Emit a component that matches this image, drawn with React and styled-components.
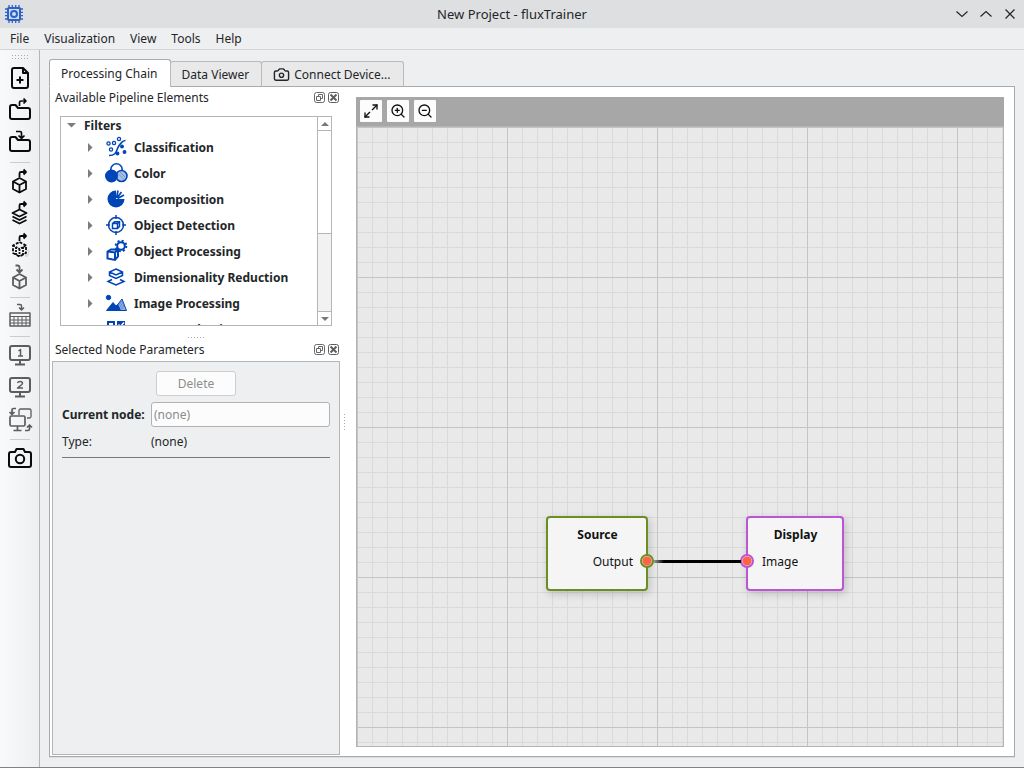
import React, { useState } from "react";
import styled, { createGlobalStyle } from "styled-components";
import { Camera, Maximize2, ZoomIn, ZoomOut } from "lucide-react";

const GlobalStyle = createGlobalStyle`
  * {
    box-sizing: border-box;
  }
  body {
    margin: 0;
    font-family: "Noto Sans", sans-serif;
    font-size: 12px;
    line-height: 19px;
    color: #232629;
    background: #eeeff1;
  }
  button,
  input {
    font: inherit;
    color: inherit;
    margin: 0;
    padding: 0;
  }
`;

const Window = styled.div`
  height: 100vh;
  display: flex;
  flex-direction: column;
  border-bottom: 1px solid #808284;
`;

const TitleBar = styled.header`
  height: 28px;
  flex-shrink: 0;
  display: grid;
  grid-template-columns: 1fr auto 1fr;
  align-items: center;
  padding: 0 4px;
  background: #dedfe1;
`;

const WindowTitle = styled.h1`
  margin: 0;
  font-size: 13px;
  line-height: 18px;
  font-weight: 400;
`;

const WindowButtons = styled.div`
  display: flex;
  justify-content: flex-end;
  gap: 12px;
  padding-right: 4px;
`;

const PlainButton = styled.button`
  display: flex;
  border: 0;
  background: none;
`;

const MenuBar = styled.nav`
  height: 22px;
  flex-shrink: 0;
  display: flex;
  align-items: center;
  gap: 15px;
  padding: 0 10px 1px;
  border-bottom: 1px solid #d3d4d6;
`;

const MenuItem = styled.button`
  border: 0;
  background: none;
`;

const Body = styled.div`
  flex: 1;
  min-height: 0;
  display: flex;
`;

const ToolBar = styled.aside`
  width: 40px;
  flex-shrink: 0;
  display: flex;
  flex-direction: column;
  border-right: 1px solid #b4b5b7;
  background: linear-gradient(to right, #f9fafc, #eeeff1);
`;

const Grip = styled.span`
  flex-shrink: 0;
  align-self: center;
  width: ${({ $vertical }) => ($vertical ? "1px" : "16px")};
  height: ${({ $vertical }) => ($vertical ? "16px" : "1px")};
  background-image: linear-gradient(to right, #a9aaac 1px, transparent 1px);
  background-size: 3px 3px;
  mask-image: linear-gradient(#000 1px, transparent 1px);
  mask-size: 3px 3px;
`;

const ToolGrip = styled(Grip)`
  height: 5px;
  margin: 5px 0 2px;
`;

const ToolButton = styled.button`
  height: 32px;
  flex-shrink: 0;
  padding-left: 4px;
  border: 0;
  background: none;
  color: ${({ disabled }) => (disabled ? "#5c5d5e" : "#0b0b0b")};
  svg {
    display: block;
  }
`;

const ToolSeparator = styled.hr`
  width: 20px;
  height: 1px;
  flex-shrink: 0;
  margin: 4px 0 2px 10px;
  border: 0;
  background: #cbccce;
`;

const Main = styled.main`
  flex: 1;
  min-width: 0;
  display: flex;
  flex-direction: column;
  padding: 9px 9px 10px;
`;

const Tabs = styled.div`
  display: flex;
  align-items: flex-end;
  height: 28px;
  margin-bottom: -1px;
  z-index: 1;
`;

const Tab = styled.button`
  height: ${({ $active }) => ($active ? "28px" : "26px")};
  display: flex;
  align-items: center;
  gap: 4px;
  padding: 0 12px 0 11px;
  margin-right: -1px;
  border: 1px solid ${({ $active }) => ($active ? "#a9aaac" : "#b9babb")};
  border-bottom-color: ${({ $active }) => ($active ? "#fff" : "#a9aaab")};
  border-radius: 3px 3px 0 0;
  background: ${({ $active }) => ($active ? "#fff" : "#e9e9ea")};
`;

const Panel = styled.section`
  flex: 1;
  min-height: 0;
  display: flex;
  border: 1px solid #a9aaab;
  background: #fff;
  box-shadow: 0 1px 0 #dcddde;
`;

const Docks = styled.div`
  width: 290px;
  flex-shrink: 0;
  display: flex;
  flex-direction: column;
  padding: 0 0 1px 2px;
`;

const DockTitle = styled.div`
  height: 22px;
  flex-shrink: 0;
  display: flex;
  align-items: center;
  gap: 3px;
  padding: 0 1px 1px 3px;
`;

const DockName = styled.h2`
  flex: 1;
  margin: 0;
  font-size: 12px;
  font-weight: 400;
`;

const TreeFrame = styled.div`
  height: 210px;
  flex-shrink: 0;
  display: flex;
  margin: 7px 8px 11px;
  border: 1px solid #b4b5b6;
`;

const Tree = styled.ul`
  flex: 1;
  margin: 0;
  padding: 0;
  overflow: hidden;
  list-style: none;
  font-weight: 700;
`;

const TreeRoot = styled.li`
  height: 17px;
  display: flex;
  align-items: center;
  gap: 8px;
  padding-left: 6px;
  line-height: 16px;
`;

const TreeItem = styled.li`
  height: 26px;
  display: flex;
  align-items: center;
  padding-left: 27px;
  white-space: nowrap;
`;

const TreeIcon = styled.svg`
  width: 24px;
  height: 24px;
  flex-shrink: 0;
  margin: 0 6px 0 11px;
  fill: none;
  stroke: #0045b8;
  stroke-width: 2;
`;

const ScrollBar = styled.div`
  width: 14px;
  display: flex;
  flex-direction: column;
  border-left: 1px solid #b4b5b6;
  background: #f2f2f2;
`;

const ScrollButton = styled.button`
  height: 14px;
  display: grid;
  place-items: center;
  border: 0;
  border-bottom: ${({ $up }) => ($up ? "1px solid #b4b5b6" : "0")};
  border-top: ${({ $up }) => ($up ? "0" : "1px solid #b4b5b6")};
  background: #fff;
`;

const ScrollThumb = styled.div`
  height: 103px;
  margin-bottom: auto;
  border-bottom: 1px solid #b4b5b6;
  background: #fff;
`;

const DockSplitter = styled.div`
  height: 2px;
  flex-shrink: 0;
  display: flex;
  justify-content: center;
  align-items: flex-start;
  ${Grip} {
    align-self: flex-start;
  }
`;

const Parameters = styled.form`
  flex: 1;
  display: flex;
  flex-direction: column;
  padding: 9px;
  border: 1px solid #b4b5b6;
  background: #eeeff1;
`;

const DeleteButton = styled.button`
  width: 80px;
  height: 25px;
  align-self: center;
  border: 1px solid #cdcecf;
  border-radius: 3px;
  background: #fcfcfc;
  color: #8b8c8d;
`;

const Fields = styled.div`
  display: grid;
  grid-template-columns: 84px 1fr;
  align-items: center;
  gap: 5px;
  padding: 6px 0;
  border-bottom: 1px solid #77797b;
`;

const FieldLabel = styled.label`
  font-weight: ${({ $bold }) => ($bold ? 700 : 400)};
  white-space: nowrap;
`;

const NodeInput = styled.input`
  width: 100%;
  height: 25px;
  padding: 0 2px;
  border: 1px solid #b1b2b3;
  border-radius: 3px;
  background: #fcfcfc;
  color: #8b8c8d;
`;

const FieldValue = styled.output`
  white-space: nowrap;
`;

const Splitter = styled.div`
  width: 16px;
  flex-shrink: 0;
  display: flex;
  padding-left: 4px;
`;

const Workspace = styled.div`
  flex: 1;
  min-width: 0;
  display: flex;
  flex-direction: column;
  margin: 10px 10px 9px 0;
`;

const CanvasBar = styled.div`
  height: 29px;
  flex-shrink: 0;
  display: flex;
  align-items: center;
  gap: 5px;
  padding: 0 0 1px 4px;
  background: #a7a7a7;
`;

const CanvasButton = styled.button`
  width: 22px;
  height: 22px;
  display: grid;
  place-items: center;
  border: 0;
  border-radius: 1px;
  background: #fcfcfc;
  color: #111;
`;

const Canvas = styled.div`
  flex: 1;
  position: relative;
  overflow: hidden;
  border: 1px solid #b4b5b6;
  background-color: #e9e9e9;
  background-image: linear-gradient(to right, #c4c4c4 1px, transparent 1px),
    linear-gradient(#c4c4c4 1px, transparent 1px),
    linear-gradient(to right, #dadada 1px, transparent 1px),
    linear-gradient(#dadada 1px, transparent 1px);
  background-size: 150px 150px, 150px 150px, 15px 15px, 15px 15px;
`;

const Node = styled.div`
  position: absolute;
  left: ${({ $x }) => $x}px;
  top: 389px;
  width: ${({ $w }) => $w}px;
  height: 75px;
  padding: 7px 13px 7px 14px;
  border: 2px solid ${({ $color }) => $color};
  border-radius: 4px;
  background: #f5f5f5;
  box-shadow: 2px 3px 8px rgba(0, 0, 0, 0.18);
  color: #111;
  text-align: ${({ $side }) => $side};
`;

const NodeTitle = styled.h3`
  margin: 0 0 8px;
  font-size: 12px;
  text-align: center;
`;

const Port = styled.span`
  position: absolute;
  top: 36px;
  ${({ $side }) => $side}: -8px;
  width: 14px;
  height: 14px;
  border: 2px solid ${({ $color }) => $color};
  border-radius: 50%;
  background: radial-gradient(circle, #ff6347 4px, #f3d9d0 5px);
`;

const Wire = styled.span`
  position: absolute;
  left: 297px;
  top: 433px;
  width: 87px;
  height: 3px;
  background: linear-gradient(to right, #999, #000 10px);
`;

const arrowOut = <path d="M15.500 12V8.500a1.500 1.500 0 0 1 1.500-1.500h5M19.500 4.500 22 7l-2.500 2.500" />;
const arrowIn = <path d="M12 5.500h4a1.500 1.500 0 0 1 1.500 1.500v5M14.500 9.500l3 3 3-3" />;
const folder = (
  <path d="M6 13a2 2 0 0 1 2-2h3.500l2.500 3H24a2 2 0 0 1 2 2v7a2 2 0 0 1-2 2H8a2 2 0 0 1-2-2z" />
);
const cube = <path d="m15.500 13 6.500 3.500v7.500L15.500 27.500 9 24v-7.500zM9 16.500l6.500 3.500 6.500-3.500M15.500 20v7.500" />;
const screen = (
  <>
    <rect x="6" y="7" width="20" height="14" rx="2" />
    <path d="M16 21v4M11 25.500h10" />
  </>
);

const toolIcons = {
  newFile: (
    <>
      <path d="M10 6h9l5 5v13a2 2 0 0 1-2 2H10a2 2 0 0 1-2-2V8a2 2 0 0 1 2-2zM19 6v5h5" />
      <path d="M16 14.500v7M12.500 18h7" />
    </>
  ),
  open: <>{folder}<g strokeWidth="1.700">{arrowOut}</g></>,
  save: <>{folder}<g strokeWidth="1.700">{arrowIn}</g></>,
  cubeOut: <g strokeWidth="1.800">{arrowOut}{cube}</g>,
  layersOut: (
    <g strokeWidth="1.800">
      {arrowOut}
      <path d="m15.500 12.500 7 3.500-7 3.500-7-3.500zM8.500 19.500l7 3.500 7-3.500M8.500 23l7 3.500 7-3.500" />
    </g>
  ),
  cubeDashed: (
    <g strokeWidth="1.800">
      {arrowOut}
      <path d="m15.500 13 6.500 3.500v7.500L15.500 27.500 9 24v-7.500z" strokeDasharray="3 1.500" />
      <path d="m9 16.500 6.500 3.500 6.500-3.500M15.500 20v7.500M12 18v8M19 18v8" strokeDasharray="2 1" />
      <path d="M22 22q4-2 3 1t-4 4q4 1 3-2" stroke="#d0d1d2" strokeWidth="1" />
    </g>
  ),
  cubeIn: (
    <g strokeWidth="1.800">
      <path d="M11.500 4.500h2a2 2 0 0 1 2 2v4M12.500 8.500l3 3 3-3" />
      {cube}
    </g>
  ),
  table: (
    <g strokeWidth="1.500">
      <path d="M13 4.500h3a1.500 1.500 0 0 1 1.500 1.500v4M15 7.500l2.500 2.500 2.500-2.500" />
      <path d="M6 13h20v13H6z" />
      <path d="M6 16.500h20M6 20h20M6 23h20M10 16.500V26M14 16.500V26M18 16.500V26M22 16.500V26" strokeWidth="1" />
    </g>
  ),
  screen1: <>{screen}<path d="m14.500 12 2-1.500v7M14 17h5" strokeWidth="1.500" /></>,
  screen2: <>{screen}<path d="M13.500 12q.5-1.500 2.500-1.500 2.500 0 2.500 1.800 0 1.200-5 4.700h5.500" strokeWidth="1.500" /></>,
  swap: (
    <g strokeWidth="1.700">
      <path d="M15 12V7.500A1.500 1.500 0 0 1 16.500 6h9A1.500 1.500 0 0 1 27 7.500v6a1.500 1.500 0 0 1-1.500 1.500H23" strokeWidth="1.300" />
      <rect x="6" y="13" width="15" height="10" rx="1.500" />
      <path d="M13.500 23v4M9.500 27.500h8M12 5.500H9.500A1.500 1.500 0 0 0 8 7v4M5.500 9 8 11.500l2.500-2.500M21 27.500h3a1.500 1.500 0 0 0 1.500-1.500v-4M23 24.500l2.500-2.500 2.500 2.500" />
    </g>
  ),
  camera: (
    <>
      <path d="M5 12a2 2 0 0 1 2-2h4l1.500-3h7l1.500 3h4a2 2 0 0 1 2 2v11a2 2 0 0 1-2 2H7a2 2 0 0 1-2-2z" />
      <circle cx="16" cy="17" r="4.200" />
    </>
  ),
};

const tools = [
  { icon: "newFile", label: "New project" },
  { icon: "open", label: "Open project" },
  { icon: "save", label: "Save project" },
  null,
  { icon: "cubeOut", label: "Open cube" },
  { icon: "layersOut", label: "Open layers" },
  { icon: "cubeDashed", label: "Open partial cube" },
  { icon: "cubeIn", label: "Save cube", disabled: true },
  null,
  { icon: "table", label: "Export table", disabled: true },
  null,
  { icon: "screen1", label: "Display 1", disabled: true },
  { icon: "screen2", label: "Display 2", disabled: true },
  { icon: "swap", label: "Swap displays", disabled: true },
  null,
  { icon: "camera", label: "Camera" },
];

const filters = [
  {
    name: "Classification",
    icon: (
      <g strokeWidth="1.300">
        <path d="M5 20.500c8 0 7-5 9.500-9S19 5.500 21.500 5.500" strokeWidth="1.600" />
        <circle cx="4.500" cy="8.500" r="1.600" />
        <circle cx="10" cy="8" r="1.600" />
        <circle cx="15" cy="4" r="1.600" />
        <circle cx="7" cy="14.500" r="1.600" />
        <g fill="#0045b8">
          <circle cx="18" cy="11.500" r="1.300" />
          <circle cx="20.500" cy="17" r="1.300" />
          <circle cx="13.500" cy="18.500" r="1.300" />
        </g>
      </g>
    ),
  },
  {
    name: "Color",
    icon: (
      <g strokeWidth="1.600">
        <circle cx="12.500" cy="8.500" r="5.700" />
        <circle cx="17.500" cy="15" r="5.500" fill="#a9c0e6" />
        <circle cx="7.500" cy="15" r="5.700" fill="#0045b8" />
        <path d="m14.500 13 5.500 5.500M16 11l5 5" stroke="#6f95d6" strokeWidth="1" />
      </g>
    ),
  },
  {
    name: "Decomposition",
    icon: (
      <>
        <path d="M12 3.500a8.500 8.500 0 1 0 8.500 8.500H12z" fill="#0045b8" stroke="none" />
        <path d="m12.500 11 1.500-7.500M13 11l4.500-6M13.500 11.500 20 8" strokeWidth="1.700" />
      </>
    ),
  },
  {
    name: "Object Detection",
    icon: (
      <g strokeWidth="1.500">
        <circle cx="12" cy="12" r="7.500" />
        <path d="M12 2v4M12 18v4M2 12h4M18 12h4" />
        <path d="m8.500 10.500 2-1.800h5v4.800l-2 2h-5zM8.500 10.500h5v5M13.500 10.500l2-1.800" />
      </g>
    ),
  },
  {
    name: "Object Processing",
    icon: (
      <>
        <path d="m3.500 12.500 3.500-2h7v7l-3 3.500-7.500-1.500zM3.500 12.500l7.500 1 3-3M11 13.500V21" />
        <circle cx="17" cy="7" r="3.800" />
        <circle cx="17" cy="7" r="5.300" strokeDasharray="2 2.160" />
      </>
    ),
  },
  {
    name: "Dimensionality Reduction",
    icon: (
      <g strokeWidth="1.500">
        <path d="m12 4 6.500 3v3.500L12 13.500l-6.500-3V7zM5.500 7l6.500 3 6.500-3" />
        <path d="M8 14.500 4 16.500l8 3.500 8-3.500-4-2" />
      </g>
    ),
  },
  {
    name: "Image Processing",
    icon: (
      <g strokeWidth="1">
        <path d="M13 14.500 18 8l4.500 11.500H15z" fill="#8facdf" />
        <path d="m14 15 4-5M15 17l4-5M17 18l3-4" stroke="#5c85cf" />
        <path d="m2.500 19.500 6.500-8 3 3.500 1.500-1.500 3 6z" fill="#0045b8" />
        <circle cx="4.500" cy="6.500" r="2.200" fill="#0045b8" />
      </g>
    ),
  },
  {
    name: "Feature Selection",
    icon: (
      <>
        <path d="M4 5h6v6H4zM4 15h6v6H4z" />
        <path d="M13 4h8v8h-8z" fill="#0045b8" stroke="none" />
        <path d="m14.500 7.500 2 2L20 5.500" stroke="#fff" strokeWidth="1.500" />
      </>
    ),
  },
];

const DockHeader = ({ name }) => (
  <DockTitle>
    <DockName>{name}</DockName>
    <PlainButton aria-label="Float panel">
      <svg width="11" height="11" fill="none" stroke="#66686a">
        <rect x=".5" y=".5" width="10" height="10" rx="2" />
        <path d="M4.500 4.500v-2h4v4h-2M2.500 4.500h4v4h-4z" />
      </svg>
    </PlainButton>
    <PlainButton aria-label="Close panel">
      <svg width="11" height="11" fill="none" stroke="#5c5e60">
        <rect x=".5" y=".5" width="10" height="10" rx="2" />
        <path d="m2.500 2.500 6 6M8.500 2.500l-6 6" strokeWidth="2" />
      </svg>
    </PlainButton>
  </DockTitle>
);

const App = () => {
  const [tab, setTab] = useState("Processing Chain");

  return (
    <>
      <GlobalStyle />
      <Window>
        <TitleBar>
          <svg width="20" height="20" fill="none" stroke="#2a62c8" strokeWidth="2">
            <path d="M5 1v18M8.300 1v18M11.700 1v18M15 1v18M1 5h18M1 8.300h18M1 11.700h18M1 15h18" strokeWidth="1.300" />
            <rect x="4" y="4" width="12" height="12" rx="1" fill="#d3dbea" />
            <circle cx="10" cy="10" r="3" />
          </svg>
          <WindowTitle>New Project - fluxTrainer</WindowTitle>
          <WindowButtons>
            <PlainButton aria-label="Minimize">
              <svg width="12" height="12" fill="none" stroke="#232629" strokeWidth="1.200"><path d="m.5 3.500 5.500 5 5.500-5" /></svg>
            </PlainButton>
            <PlainButton aria-label="Maximize">
              <svg width="12" height="12" fill="none" stroke="#232629" strokeWidth="1.200"><path d="m.5 8.500 5.500-5 5.500 5" /></svg>
            </PlainButton>
            <PlainButton aria-label="Close">
              <svg width="12" height="12" fill="none" stroke="#232629" strokeWidth="1.200"><path d="m1.500 1.500 9 9M10.500 1.500l-9 9" /></svg>
            </PlainButton>
          </WindowButtons>
        </TitleBar>

        <MenuBar>
          {["File", "Visualization", "View", "Tools", "Help"].map((item) => (
            <MenuItem key={item}>{item}</MenuItem>
          ))}
        </MenuBar>

        <Body>
          <ToolBar>
            <ToolGrip />
            {tools.map((tool, i) =>
              tool ? (
                <ToolButton key={i} aria-label={tool.label} disabled={tool.disabled}>
                  <svg width="32" height="32" fill="none" stroke="currentColor" strokeWidth="2" strokeLinejoin="round">
                    {toolIcons[tool.icon]}
                  </svg>
                </ToolButton>
              ) : (
                <ToolSeparator key={i} />
              )
            )}
          </ToolBar>

          <Main>
            <Tabs role="tablist">
              {["Processing Chain", "Data Viewer", "Connect Device..."].map((name) => (
                <Tab
                  key={name}
                  role="tab"
                  aria-selected={tab === name}
                  $active={tab === name}
                  onClick={() => setTab(name)}
                >
                  {name === "Connect Device..." && <Camera size={17} strokeWidth={2} />}
                  {name}
                </Tab>
              ))}
            </Tabs>

            <Panel>
              <Docks>
                <DockHeader name="Available Pipeline Elements" />
                <TreeFrame>
                  <Tree>
                    <TreeRoot>
                      <svg width="9" height="5" fill="#7b7c7d"><path d="M0 0h9L4.500 4.500z" /></svg>
                      Filters
                    </TreeRoot>
                    {filters.map(({ name, icon }) => (
                      <TreeItem key={name}>
                        <svg width="5" height="9" fill="#7b7c7d"><path d="M0 0v9l4.500-4.500z" /></svg>
                        <TreeIcon>{icon}</TreeIcon>
                        {name}
                      </TreeItem>
                    ))}
                  </Tree>
                  <ScrollBar>
                    <ScrollButton $up aria-label="Scroll up">
                      <svg width="8" height="4" fill="#77787a"><path d="M0 4h8L4 0z" /></svg>
                    </ScrollButton>
                    <ScrollThumb />
                    <ScrollButton aria-label="Scroll down">
                      <svg width="8" height="4" fill="#77787a"><path d="M0 0h8L4 4z" /></svg>
                    </ScrollButton>
                  </ScrollBar>
                </TreeFrame>
                <DockSplitter>
                  <Grip />
                </DockSplitter>
                <DockHeader name="Selected Node Parameters" />
                <Parameters onSubmit={(e) => e.preventDefault()}>
                  <DeleteButton type="button" disabled>Delete</DeleteButton>
                  <Fields>
                    <FieldLabel $bold htmlFor="current-node">Current node:</FieldLabel>
                    <NodeInput id="current-node" defaultValue="(none)" disabled />
                    <FieldLabel htmlFor="node-type">Type:</FieldLabel>
                    <FieldValue id="node-type">(none)</FieldValue>
                  </Fields>
                </Parameters>
              </Docks>
              <Splitter>
                <Grip $vertical />
              </Splitter>
              <Workspace>
                <CanvasBar>
                  <CanvasButton aria-label="Fit to view"><Maximize2 size={16} /></CanvasButton>
                  <CanvasButton aria-label="Zoom in"><ZoomIn size={16} /></CanvasButton>
                  <CanvasButton aria-label="Zoom out"><ZoomOut size={16} /></CanvasButton>
                </CanvasBar>
                <Canvas>
                  <Node $x={189} $w={102} $color="#6b8e23" $side="right">
                    <NodeTitle>Source</NodeTitle>
                    Output
                    <Port $side="right" $color="#6b8e23" />
                  </Node>
                  <Node $x={389} $w={98} $color="#ba55d3" $side="left">
                    <NodeTitle>Display</NodeTitle>
                    Image
                    <Port $side="left" $color="#ba55d3" />
                  </Node>
                  <Wire />
                </Canvas>
              </Workspace>
            </Panel>
          </Main>
        </Body>
      </Window>
    </>
  );
};

export default App;
